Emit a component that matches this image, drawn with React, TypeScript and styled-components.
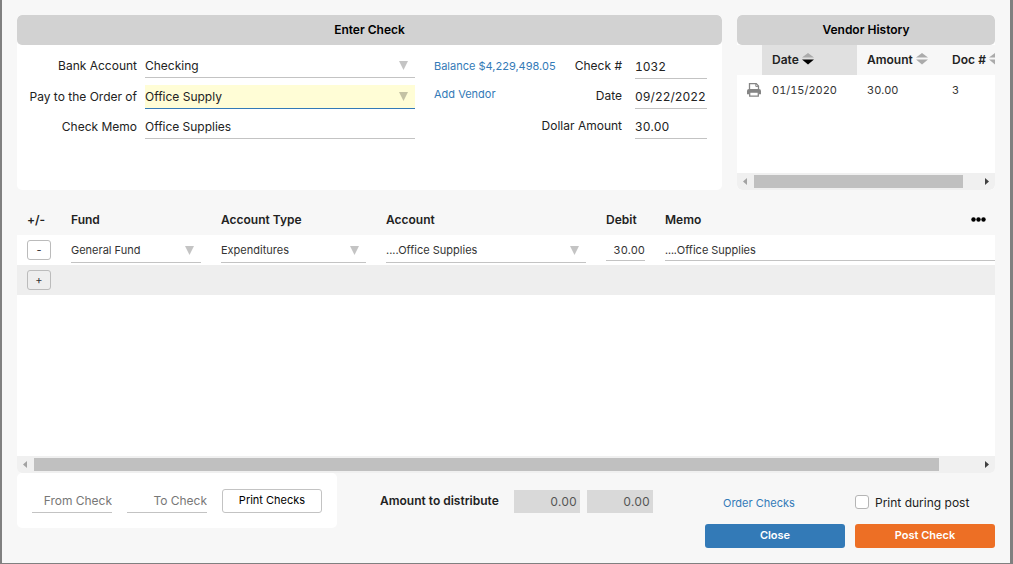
import React from "react";
import styled, { createGlobalStyle } from "styled-components";

const GlobalStyle = createGlobalStyle`
  *, *::before, *::after { box-sizing: border-box; }
  body {
    margin: 0;
    background: #808080;
    color: #222;
    font-family: Inter, "Liberation Sans", sans-serif;
    font-size: 12px;
  }
  button, input, select { font: inherit; color: inherit; margin: 0; }
`;

const line = "#c3c3c3";
const blue = "#337ab7";

const Dialog = styled.main`
  display: flex;
  flex-direction: column;
  min-height: calc(100vh - 1px);
  margin: 0 3px 1px 2px;
  padding: 15px;
  background: #f7f7f7;
`;

const TopRow = styled.div`
  display: flex;
  gap: 15px;
  margin-bottom: 15px;
`;

const Panel = styled.section<{ $width?: number }>`
  display: flex;
  flex-direction: column;
  flex: ${(p) => (p.$width ? `0 0 ${p.$width}px` : "1 1 0")};
  min-width: 0;
  min-height: 175px;
  background: #fff;
  border-radius: 5px;
  overflow: hidden;
`;

const PanelTitle = styled.h2`
  margin: 0;
  background: #d2d2d2;
  border-radius: 5px;
  color: #000;
  font-size: 12px;
  font-weight: 600;
  line-height: 30px;
  text-align: center;
`;

const CheckForm = styled.form`
  display: flex;
  padding: 9px 15px 0 0;
`;

const PayeeFields = styled.div`
  flex: 1;
  display: grid;
  grid-template-columns: 120px 1fr;
  grid-template-rows: 25px 24px 24px;
  gap: 6px 8px;
`;

const Label = styled.label`
  line-height: 24px;
  text-align: right;
  white-space: nowrap;
`;

const Middle = styled.div`
  display: grid;
  width: 188px;
  margin: 0 13px 0 19px;
`;

const Links = styled.div`
  grid-area: 1 / 1;
  justify-self: start;
  display: flex;
  flex-direction: column;
`;

const TextLink = styled.a`
  color: ${blue};
  font-size: 11px;
  line-height: 24px;
  margin-bottom: 4px;
  white-space: nowrap;
  text-decoration: none;
`;

const Labels = styled.div`
  grid-area: 1 / 1;
  justify-self: end;
  display: flex;
  flex-direction: column;
  gap: 6px;
`;

const Values = styled.div`
  display: flex;
  flex-direction: column;
  gap: 6px;
  width: 72px;
  padding-top: 1px;
`;

const TextField = styled.input<{ $right?: boolean; $small?: boolean }>`
  display: block;
  width: 100%;
  height: 24px;
  padding: 0;
  border: 0;
  border-bottom: 1px solid ${line};
  border-radius: 0;
  background: transparent;
  outline: none;
  font-size: ${(p) => (p.$small ? 11 : 12)}px;
  font-variant-numeric: tabular-nums;
  text-align: ${(p) => (p.$right ? "right" : "left")};
  &::placeholder { color: #777; opacity: 1; }
`;

const SelectBox = styled.div<{ $active?: boolean }>`
  position: relative;
  height: 24px;
  background: ${(p) => (p.$active ? "#fffdd6" : "transparent")};
  border-bottom: 1px solid ${(p) => (p.$active ? blue : line)};
`;

const Select = styled.select<{ $small?: boolean }>`
  display: block;
  width: 100%;
  height: 23px;
  padding: 0 20px 0 0;
  border: 0;
  background: transparent;
  appearance: none;
  outline: none;
  font-size: ${(p) => (p.$small ? 11 : 12)}px;
`;

const Arrow = styled.svg`
  position: absolute;
  top: 7px;
  right: 7px;
  width: 9px;
  height: 9px;
  fill: rgba(0, 0, 0, 0.23);
  pointer-events: none;
`;

type DropDownProps = { id?: string; label?: string; value: string; active?: boolean; small?: boolean };

function DropDown({ id, label, value, active, small }: DropDownProps) {
  return (
    <SelectBox $active={active}>
      <Select id={id} aria-label={label} $small={small} defaultValue={value}>
        <option>{value}</option>
      </Select>
      <Arrow viewBox="0 0 9 9" aria-hidden="true"><path d="M0 0h9L4.5 9z" /></Arrow>
    </SelectBox>
  );
}

const Clip = styled.div`
  position: relative;
  flex: 1;
  overflow: hidden;
`;

const HistoryTable = styled.table`
  width: 310px;
  table-layout: fixed;
  border-collapse: collapse;
  font-size: 11px;
  color: #333;
  th, td {
    height: 30px;
    padding: 0 0 0 10px;
    text-align: left;
    white-space: nowrap;
    font-variant-numeric: tabular-nums;
  }
  th {
    padding-bottom: 1px;
    background: #f7f7f7;
    color: #222;
    font-size: 12px;
    font-weight: 600;
  }
  th[aria-sort] { background: #e0e0e0; }
`;

const SortMark = styled.svg`
  width: 12px;
  height: 12px;
  margin-left: 3px;
  vertical-align: -1px;
`;

function Sort({ down }: { down?: boolean }) {
  return (
    <SortMark viewBox="0 0 12 12" aria-hidden="true">
      <path d="M0 4.500L6 0l6 4.500z" fill="#ababab" />
      <path d="M0 6.500h12l-6 5z" fill={down ? "#000" : "#ababab"} />
    </SortMark>
  );
}

const IconButton = styled.button`
  display: block;
  padding: 0;
  border: 0;
  background: none;
  line-height: 0;
`;

const Bar = styled.div`
  display: flex;
  flex: 0 0 17px;
  align-items: center;
  background: #f0f0f0;
  border-radius: 0 0 5px 5px;
`;

const BarButton = styled.button`
  width: 17px;
  height: 17px;
  padding: 0;
  border: 0;
  background: none;
  line-height: 0;
`;

const Track = styled.div`
  flex: 1;
`;

const Thumb = styled.div<{ $size: number }>`
  width: ${(p) => p.$size}%;
  height: 13px;
  background: #c0c0c0;
`;

function ScrollBar({ size }: { size: number }) {
  return (
    <Bar>
      <BarButton type="button" aria-label="Scroll left">
        <svg width="17" height="17" viewBox="0 0 17 17"><path d="M10 5v7L6 8.500z" fill="#a3a3a3" /></svg>
      </BarButton>
      <Track><Thumb $size={size} /></Track>
      <BarButton type="button" aria-label="Scroll right">
        <svg width="17" height="17" viewBox="0 0 17 17"><path d="M7 5v7l4-3.500z" fill="#404040" /></svg>
      </BarButton>
    </Bar>
  );
}

const Distribution = styled.section`
  display: flex;
  flex-direction: column;
  flex: 1;
  background: #fff;
  border-radius: 5px;
`;

const LineTable = styled.table`
  width: 1200px;
  table-layout: fixed;
  border-collapse: collapse;
  font-size: 12px;
  color: #333;
  th, td {
    height: 30px;
    padding: 0 10px;
    text-align: left;
    white-space: nowrap;
  }
  th {
    padding-bottom: 1px;
    background: #f7f7f7;
    color: #222;
    font-weight: 600;
  }
  td { vertical-align: top; }
  td ${SelectBox} { margin-top: 4px; height: 24px; }
  td ${Select} { height: 22px; }
  td ${TextField} { margin-top: 3px; height: 23px; padding-top: 1px; }
  tr.add { background: #eee; }
`;

const StepButton = styled.button`
  display: block;
  width: 24px;
  height: 20px;
  margin-top: 5px;
  padding: 0;
  border: 1px solid #bbb;
  border-radius: 3px;
  background: transparent;
  font-size: 11px;
  line-height: 16px;
`;

const MoreButton = styled(IconButton)`
  position: absolute;
  top: 12px;
  right: 9px;
`;

const Footer = styled.footer`
  display: flex;
  align-items: flex-start;
`;

const PrintBox = styled.div`
  display: grid;
  grid-template-columns: 80px 80px 100px;
  gap: 15px;
  height: 55px;
  padding: 16px 15px 0;
  background: #fff;
  border-radius: 5px;
`;

const PrintButton = styled.button`
  height: 24px;
  padding: 0 0 2px;
  border: 1px solid ${line};
  border-radius: 3px;
  background: #fff;
  color: #000;
  font-size: 11px;
`;

const Amounts = styled.div`
  display: flex;
  gap: 7px;
  margin-left: 43px;
  padding-top: 17px;
  line-height: 22px;
`;

const AmountLabel = styled.label`
  margin-right: 8px;
  font-weight: 600;
  white-space: nowrap;
`;

const Total = styled.input`
  width: 66px;
  height: 23px;
  padding: 0 3px;
  border: 0;
  background: #d9d9d9;
  color: #555;
  font-variant-numeric: tabular-nums;
  text-align: right;
`;

const Actions = styled.div`
  display: grid;
  grid-template-columns: 140px 140px;
  grid-template-rows: 28px 24px;
  column-gap: 10px;
  row-gap: 8px;
  margin-left: auto;
  padding-top: 15px;
`;

const OrderLink = styled.a`
  padding-left: 18px;
  color: ${blue};
  font-size: 11px;
  line-height: 30px;
  text-decoration: none;
`;

const CheckLabel = styled.label`
  display: flex;
  align-items: center;
  gap: 6px;
  white-space: nowrap;
`;

const CheckBox = styled.input`
  appearance: none;
  width: 14px;
  height: 14px;
  border: 1px solid #b5b5b5;
  border-radius: 3px;
  background: #fff;
`;

const ActionButton = styled.button<{ $color: string }>`
  padding: 0 0 2px;
  border: 0;
  border-radius: 3px;
  background: ${(p) => p.$color};
  color: #fff;
  font-size: 11px;
  font-weight: 600;
`;

export default function App() {
  return (
    <>
      <GlobalStyle />
      <Dialog>
        <TopRow>
          <Panel>
            <PanelTitle>Enter Check</PanelTitle>
            <CheckForm>
              <PayeeFields>
                <Label htmlFor="bank">Bank Account</Label>
                <DropDown id="bank" value="Checking" />
                <Label htmlFor="payee">Pay to the Order of</Label>
                <DropDown id="payee" value="Office Supply" active />
                <Label htmlFor="memo">Check Memo</Label>
                <TextField id="memo" defaultValue="Office Supplies" />
              </PayeeFields>
              <Middle>
                <Links>
                  <TextLink href="#balance">Balance $4,229,498.05</TextLink>
                  <TextLink href="#vendor">Add Vendor</TextLink>
                </Links>
                <Labels>
                  <Label htmlFor="number">Check #</Label>
                  <Label htmlFor="date">Date</Label>
                  <Label htmlFor="amount">Dollar Amount</Label>
                </Labels>
              </Middle>
              <Values>
                <TextField id="number" defaultValue="1032" />
                <TextField id="date" defaultValue="09/22/2022" />
                <TextField id="amount" defaultValue="30.00" />
              </Values>
            </CheckForm>
          </Panel>

          <Panel $width={258}>
            <PanelTitle>Vendor History</PanelTitle>
            <Clip>
              <HistoryTable>
                <colgroup>
                  <col width="25" /><col width="95" /><col width="85" /><col />
                </colgroup>
                <thead>
                  <tr>
                    <th />
                    <th aria-sort="descending">Date<Sort down /></th>
                    <th>Amount<Sort /></th>
                    <th>Doc #<Sort /></th>
                  </tr>
                </thead>
                <tbody>
                  <tr>
                    <td>
                      <IconButton type="button" aria-label="Print">
                        <svg width="14" height="14" viewBox="0 0 14 14" fill="none">
                          <path d="M2.500 6.500V.7h6.800l2.200 2.200v3.600" stroke="#858585" strokeWidth="1.300" />
                          <path d="M8.800 1v2.400h2.500" stroke="#858585" />
                          <path d="M0 8Q0 6 2 6h10q2 0 2 2v3.200h-2.200V9.500H2.200v1.700H0z" fill="#858585" />
                          <path d="M2.700 9.200v3.900h8.600V9.200z" fill="#fff" stroke="#858585" strokeWidth="1.300" />
                        </svg>
                      </IconButton>
                    </td>
                    <td>01/15/2020</td>
                    <td>30.00</td>
                    <td>3</td>
                  </tr>
                </tbody>
              </HistoryTable>
            </Clip>
            <ScrollBar size={93.3} />
          </Panel>
        </TopRow>

        <Distribution>
          <Clip>
            <LineTable>
              <colgroup>
                <col width="44" /><col width="150" /><col width="165" />
                <col width="220" /><col width="59" /><col />
              </colgroup>
              <thead>
                <tr>
                  <th>+/-</th>
                  <th>Fund</th>
                  <th>Account Type</th>
                  <th>Account</th>
                  <th>Debit</th>
                  <th>Memo</th>
                </tr>
              </thead>
              <tbody>
                <tr>
                  <td><StepButton type="button">-</StepButton></td>
                  <td><DropDown label="Fund" value="General Fund" small /></td>
                  <td><DropDown label="Account Type" value="Expenditures" small /></td>
                  <td><DropDown label="Account" value="....Office Supplies" small /></td>
                  <td><TextField aria-label="Debit" defaultValue="30.00" $right $small /></td>
                  <td><TextField aria-label="Memo" defaultValue="....Office Supplies" $small /></td>
                </tr>
                <tr className="add">
                  <td><StepButton type="button">+</StepButton></td>
                  <td colSpan={5} />
                </tr>
              </tbody>
            </LineTable>
            <MoreButton type="button" aria-label="More">
              <svg width="15" height="5" viewBox="0 0 15 5">
                <circle cx="2.500" cy="2.500" r="2.200" /><circle cx="7.500" cy="2.500" r="2.200" /><circle cx="12.500" cy="2.500" r="2.200" />
              </svg>
            </MoreButton>
          </Clip>
          <ScrollBar size={95.9} />
        </Distribution>

        <Footer>
          <PrintBox>
            <TextField aria-label="From Check" placeholder="From Check" $right />
            <TextField aria-label="To Check" placeholder="To Check" $right />
            <PrintButton type="button">Print Checks</PrintButton>
          </PrintBox>
          <Amounts>
            <AmountLabel htmlFor="distribute">Amount to distribute</AmountLabel>
            <Total id="distribute" defaultValue="0.00" readOnly />
            <Total aria-label="Amount distributed" defaultValue="0.00" readOnly />
          </Amounts>
          <Actions>
            <OrderLink href="#order">Order Checks</OrderLink>
            <CheckLabel><CheckBox type="checkbox" />Print during post</CheckLabel>
            <ActionButton type="button" $color="#337ab7">Close</ActionButton>
            <ActionButton type="button" $color="#ed6f25">Post Check</ActionButton>
          </Actions>
        </Footer>
      </Dialog>
    </>
  );
}
